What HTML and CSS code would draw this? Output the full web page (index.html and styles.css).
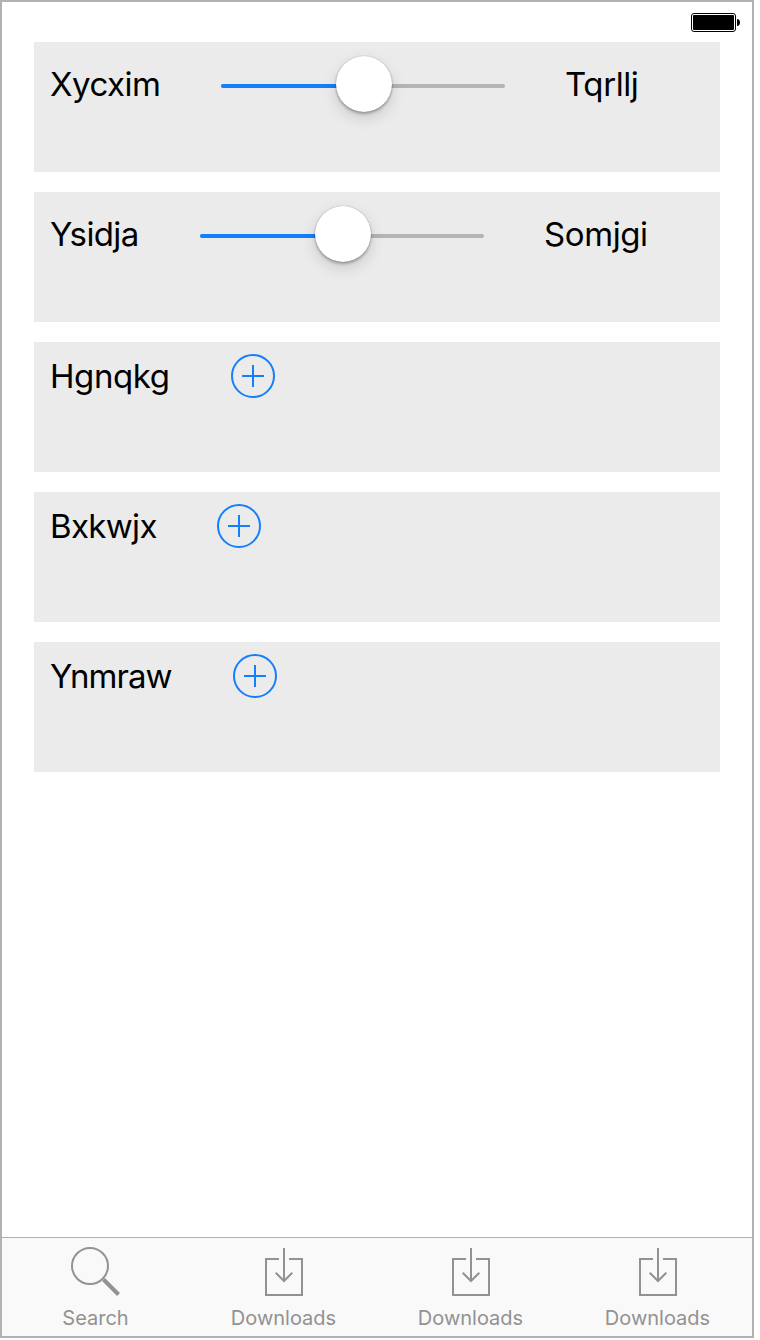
FILE: index.html
```html
<!DOCTYPE html>
<html lang="en">
<head>
<meta charset="utf-8">
<title>Controls</title>
<link rel="stylesheet" href="styles.css">
</head>
<body>
<svg class="defs" width="0" height="0" aria-hidden="true">
  <symbol id="add" viewBox="0 0 44 44"><circle cx="22" cy="22" r="21"/><path d="M22 11v22M11 22h22"/></symbol>
  <symbol id="download" viewBox="0 0 50 50"><path d="M20 12H7v36h36V12H30M25 1v33M16.700 25.700L25 34l8.300-8.300"/></symbol>
</svg>
<div class="phone">
  <header class="status">
    <svg class="battery" width="50" height="20" viewBox="0 0 50 20"><rect class="shell" x=".5" y=".5" width="44" height="18" rx="2.500"/><rect x="2" y="2" width="41" height="15" rx="1"/><path d="M46 6c4 0 4 7 0 7z"/></svg>
  </header>
  <main class="rows">
    <section class="row row-slider">
      <span class="label w-xycxim">Xycxim</span>
      <div class="slider"><div class="fill"></div><div class="knob"></div></div>
      <span class="label w-tqrllj">Tqrllj</span>
    </section>
    <section class="row row-slider">
      <span class="label w-ysidja">Ysidja</span>
      <div class="slider"><div class="fill"></div><div class="knob"></div></div>
      <span class="label w-somjgi">Somjgi</span>
    </section>
    <section class="row">
      <span class="label w-hgnqkg">Hgnqkg</span>
      <svg class="add"><use href="#add"/></svg>
    </section>
    <section class="row">
      <span class="label w-bxkwjx">Bxkwjx</span>
      <svg class="add"><use href="#add"/></svg>
    </section>
    <section class="row">
      <span class="label w-ynmraw">Ynmraw</span>
      <svg class="add"><use href="#add"/></svg>
    </section>
  </main>
  <nav class="tabs">
    <div class="tab tab-search">
      <svg class="icon" viewBox="0 0 50 50"><circle cx="19" cy="19" r="18"/><path class="handle" d="M32.500 32.500L47.500 47.500"/></svg>
      <span>Search</span>
    </div>
    <div class="tab"><svg class="icon"><use href="#download"/></svg><span>Downloads</span></div>
    <div class="tab"><svg class="icon"><use href="#download"/></svg><span>Downloads</span></div>
    <div class="tab"><svg class="icon"><use href="#download"/></svg><span>Downloads</span></div>
  </nav>
</div>
</body>
</html>
```

FILE: styles.css
```css
body {
  margin: 0;
  background: #fff;
  font-family: Inter, "Liberation Sans", sans-serif;
}
.defs { display: block; }
.phone {
  box-sizing: border-box;
  width: 754px;
  height: 1338px;
  border: 2px solid #b2b2b2;
  display: flex;
  flex-direction: column;
}
.status {
  height: 40px;
  box-sizing: border-box;
  padding: 11px 11px 0 0;
  display: flex;
  justify-content: flex-end;
}
.battery .shell { fill: none; stroke: #000; stroke-width: 1; }
.rows {
  flex: 1;
  padding: 0 32px;
  display: flex;
  flex-direction: column;
  gap: 20px;
}
.row {
  height: 130px;
  box-sizing: border-box;
  padding: 12px 16px 0;
  background: #ebebeb;
  display: flex;
  align-items: flex-start;
  gap: 60px;
}
.label {
  padding-top: 2px;
  font-size: 33px;
  line-height: 40px;
  white-space: nowrap;
  color: #000;
  letter-spacing: -0.4px;
}
.row-slider .label { padding-top: 10px; }
.w-xycxim { width: 111px; letter-spacing: -0.5px; }
.w-ysidja { width: 90px; letter-spacing: -0.6px; }
.w-hgnqkg { width: 121px; }
.w-bxkwjx { width: 107px; letter-spacing: -0.65px; }
.w-ynmraw { width: 123px; letter-spacing: -1px; }
.add {
  width: 44px;
  height: 44px;
  fill: none;
  stroke: #147efb;
  stroke-width: 2;
}
.slider {
  position: relative;
  width: 284px;
  height: 4px;
  margin-top: 30px;
  border-radius: 2px;
  background: #b4b4b4;
}
.fill {
  width: 50%;
  height: 4px;
  border-radius: 2px;
  background: #147efb;
}
.knob {
  position: absolute;
  left: 115px;
  top: -28px;
  width: 56px;
  height: 56px;
  border-radius: 50%;
  background: #fff;
  box-shadow: 0 0 1px rgba(0,0,0,.35), 0 2px 3px rgba(0,0,0,.28), 0 6px 15px rgba(0,0,0,.14);
}
.tabs {
  height: 99px;
  box-sizing: border-box;
  border-top: 1px solid #b2b2b2;
  background: #f9f9f9;
  display: grid;
  grid-template-columns: 186px repeat(3, 187px);
  padding-left: 1px;
}
.tab {
  display: flex;
  flex-direction: column;
  align-items: center;
  padding-top: 9px;
  font-size: 20px;
  line-height: 24px;
  color: #929292;
}
.tab:nth-child(n+2) { padding-left: 2px; }
.tab-search { margin-left: -1px; }
.tab span { margin-top: 9px; }
.icon {
  width: 50px;
  height: 50px;
  fill: none;
  stroke: #929292;
  stroke-width: 2;
}
.handle { stroke-width: 4; }
```
